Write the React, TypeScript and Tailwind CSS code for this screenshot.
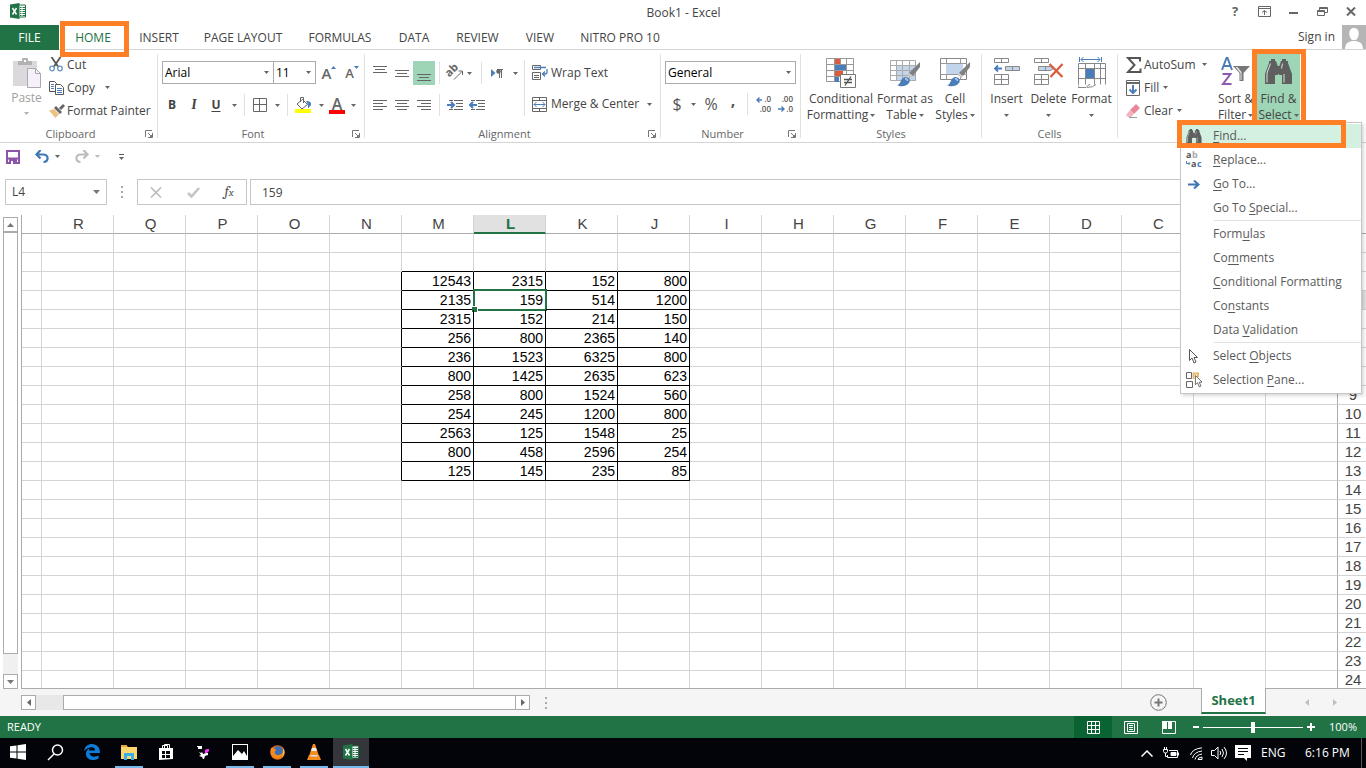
import type { ReactNode } from "react";
import clsx from "clsx";

const COLUMNS = ["R", "Q", "P", "O", "N", "M", "L", "K", "J", "I", "H", "G", "F", "E", "D", "C", "B", "A"];
const ROWS = Array.from({ length: 24 }, (_, i) => i + 1);
const DATA_COLUMNS = ["M", "L", "K", "J"];
const FIRST_DATA_ROW = 3;
const VALUES = [
	[12543, 2315, 152, 800],
	[2135, 159, 514, 1200],
	[2315, 152, 214, 150],
	[256, 800, 2365, 140],
	[236, 1523, 6325, 800],
	[800, 1425, 2635, 623],
	[258, 800, 1524, 560],
	[254, 245, 1200, 800],
	[2563, 125, 1548, 25],
	[800, 458, 2596, 254],
	[125, 145, 235, 85],
];

const TABS = [
	{ name: "HOME", width: "w-[68px]" },
	{ name: "INSERT", width: "w-[64px]" },
	{ name: "PAGE LAYOUT", width: "w-[104px]" },
	{ name: "FORMULAS", width: "w-[90px]" },
	{ name: "DATA", width: "w-[58px]" },
	{ name: "REVIEW", width: "w-[69px]" },
	{ name: "VIEW", width: "w-[56px]" },
	{ name: "NITRO PRO 10", width: "w-[104px]" },
];

/* ---------- small pieces ---------- */

function Arrow({ className = "text-[#666]" }: { className?: string }) {
	return (
		<svg width="5" height="3" viewBox="0 0 5 3" className={clsx("shrink-0", className)} fill="currentColor">
			<path d="M0 0h5L2.5 3z" />
		</svg>
	);
}

function DropButton({ label, className }: { label: string; className: string }) {
	return (
		<button aria-label={label} className={clsx("h-6 flex items-center justify-center", className)}>
			<Arrow />
		</button>
	);
}

function IconButton({ label, className = "w-[22px]", children }: { label: string; className?: string; children: ReactNode }) {
	return (
		<button aria-label={label} className={clsx("h-6 shrink-0 flex items-center justify-center", className)}>
			{children}
		</button>
	);
}

function Divider({ className = "h-[22px]" }: { className?: string }) {
	return <div className={clsx("w-px shrink-0 bg-[#e1e1e1]", className)} />;
}

function Launcher() {
	return (
		<svg width="8" height="8" viewBox="0 0 8 8" fill="none" stroke="#777">
			<path d="M.5 7V.5H7M3 3l3 3" />
			<path d="M7.5 3v4.5H3" />
			<path d="M5 7l2-2v2z" fill="#777" />
		</svg>
	);
}

function Group({ name, width, launcher, children }: { name?: string; width: string; launcher?: boolean; children: ReactNode }) {
	return (
		<>
			<section className={clsx("shrink-0 flex flex-col", width)}>
				<div className="h-[76px]">{children}</div>
				<div className="h-4 flex items-center pr-1">
					<span className={clsx("flex-1 text-center text-[11px] text-[#666]", launcher ? "pr-1" : "pl-1")}>{name}</span>
					{launcher && (
						<button aria-label={`${name} settings`}>
							<Launcher />
						</button>
					)}
				</div>
			</section>
			{name && <div className="my-1 w-px shrink-0 bg-[#e1e1e1]" />}
		</>
	);
}

function BigButton({ icon, lines, width }: { icon: ReactNode; lines: string[]; width: string }) {
	return (
		<button className={clsx("h-[74px] shrink-0 flex flex-col items-center pt-[7px] whitespace-nowrap", width)}>
			<span className="h-[34px]">{icon}</span>
			<span className="leading-4">{lines[0]}</span>
			<span className="h-4 leading-4 flex items-center gap-[2px]">
				{lines[1]}
				<Arrow />
			</span>
		</button>
	);
}

/* ---------- drawings ---------- */

function ExcelLogo() {
	return (
		<svg width="16" height="16" viewBox="0 0 16 16">
			<path d="M8 2h7.5v12H8z" fill="#fff" stroke="#217346" />
			<path d="M10 4.500h1.500M12.500 4.500H15M10 6.500h1.500M12.500 6.500H15M10 8.500h1.500M12.500 8.500H15M10 10.500h1.500M12.500 10.500H15M10 12.500h1.500M12.500 12.500H15" stroke="#217346" />
			<path d="M0 1.500L9.500 0v16L0 14.500z" fill="#217346" />
			<path d="M2.500 5l4 6.500M6.500 5l-4 6.500" stroke="#fff" strokeWidth="1.500" />
		</svg>
	);
}

function PasteIcon() {
	return (
		<svg width="28" height="30" viewBox="0 0 28 30">
			<path d="M0 3h24v25H0z" fill="#dcd9dd" />
			<path d="M5 3h4V1q0-1 1-1h4q1 0 1 1v2h4v4H5z" fill="#b4b1b5" />
			<path d="M11 2h2v2h-2z" fill="#fff" />
			<path d="M14.500 10.500h8l5 5v14h-13z" fill="#f6f0fa" stroke="#aaa" />
			<path d="M22.500 10.500v5h5" fill="none" stroke="#aaa" />
		</svg>
	);
}

function CutIcon() {
	return (
		<svg width="14" height="15" viewBox="0 0 14 15" fill="none">
			<path d="M2.500 0l6.500 9.500M11.500 0L5 9.500" stroke="#555" strokeWidth="1.800" />
			<circle cx="3" cy="11.500" r="2.300" stroke="#6a93bf" strokeWidth="1.300" />
			<circle cx="11" cy="11.500" r="2.300" stroke="#6a93bf" strokeWidth="1.300" />
		</svg>
	);
}

function CopyIcon() {
	return (
		<svg width="15" height="14" viewBox="0 0 15 14" fill="#fff" stroke="#555">
			<path d="M.5.5h5l2 2v8h-7z" />
			<path d="M2 3.500h3M2 5.500h3M2 7.500h3" stroke="#4a7ebb" />
			<path d="M6.500 3.500h5l3 3v7h-8z" />
			<path d="M8 7.500h5M8 9.500h5M8 11.500h5" stroke="#4a7ebb" />
		</svg>
	);
}

function BrushIcon() {
	return (
		<svg width="16" height="14" viewBox="0 0 16 14">
			<path d="M0 6.500l5-1.500 5 5-3.500 4z" fill="#eac282" />
			<path d="M5 4l2-2 6 6-2 2z" fill="#666" />
			<path d="M10 4l4-4 2 2-4 4z" fill="#666" />
		</svg>
	);
}

function BordersIcon() {
	return (
		<svg width="14" height="14" viewBox="0 0 14 14" fill="none" stroke="#666">
			<path d="M.5.500h13v13H.5zM6.500.500v13M.5 6.500h13" />
		</svg>
	);
}

function FillColorIcon() {
	return (
		<svg width="16" height="16" viewBox="0 0 16 16" fill="none">
			<path d="M7.500 2.500l5 5-5.500 4.500L2 7z" stroke="#666" fill="#fff" />
			<path d="M5.500 5V.5h3V6" stroke="#666" />
			<path d="M11 4c4-.5 5.500 2 5 4l-3 3.500c0-3 0-4.500-2-7.500z" fill="#4a7ebb" />
			<path d="M0 12h16v4H0z" fill="#ff0" />
		</svg>
	);
}

type AlignKind = "left" | "center" | "right";

function Lines({ kind = "left", count = 4 }: { kind?: AlignKind; count?: number }) {
	return (
		<svg width="14" height={count * 3} viewBox={`0 0 14 ${count * 3}`} stroke="#666">
			{Array.from({ length: count }, (_, i) => {
				const inset = i % 2 === 1 ? 4 : 0;
				const x1 = kind === "left" ? 0 : kind === "right" ? inset : inset / 2;
				return <path key={i} d={`M${x1} ${i * 3 + 1.5}h${14 - inset}`} />;
			})}
		</svg>
	);
}

function IndentIcon({ back }: { back?: boolean }) {
	return (
		<svg width="16" height="11" viewBox="0 0 16 11" fill="none">
			<path d="M2 .5h4M7 .5h9M9 3.500h7M9 6.500h7M2 9.500h4M7 9.500h9" stroke="#666" />
			{back ? (
				<path d="M8 5H1M4 2L1 5l3 3" stroke="#4a7ebb" strokeWidth="2" />
			) : (
				<path d="M0 5h7M4 2l3 3-3 3" stroke="#4a7ebb" strokeWidth="2" />
			)}
		</svg>
	);
}

function OrientationIcon() {
	return (
		<svg width="17" height="16" viewBox="0 0 17 16" fill="none" stroke="#666" className="overflow-visible">
			<text x="0" y="11" transform="rotate(-45 3 9)" fontSize="11" fontWeight="bold" fill="#666" stroke="none">
				ab
			</text>
			<path d="M7 14.500l8-8M11.500 6H15.500v4" />
		</svg>
	);
}

function DirectionIcon() {
	return (
		<svg width="12" height="9" viewBox="0 0 12 9">
			<path d="M0 0l4.500 4L0 8z" fill="#4a7ebb" />
			<path d="M8.500 0v9M10.500 0v9M6 .500h6" stroke="#666" />
			<circle cx="7.500" cy="2.500" r="2.300" fill="#666" />
		</svg>
	);
}

function WrapIcon() {
	return (
		<svg width="16" height="16" viewBox="0 0 16 16" fill="none" stroke="#666">
			<path d="M.5.500h8v4h-8zM.5 7.500h8v7h-8zM2 10.500h5M2 12.500h5" />
			<path d="M2 2.500h12M15 4v3q0 2-2 2h-3M13 6.500L10.500 9l2.500 2.500" stroke="#4a7ebb" strokeWidth="1.300" />
		</svg>
	);
}

function MergeIcon() {
	return (
		<svg width="15" height="15" viewBox="0 0 15 15" fill="none" stroke="#666">
			<path d="M.5.500h14v14H.5zM.5 3.500h14M.5 11.500h14M7.500.500v3M7.500 11.500v3" />
			<path d="M2 7.500h11M4.500 5L2 7.500 4.500 10M10.500 5L13 7.500 10.500 10" stroke="#4a7ebb" />
		</svg>
	);
}

function DecimalIcon({ less }: { less?: boolean }) {
	return (
		<svg width="15" height="15" viewBox="0 0 15 15" fontSize="8" fontWeight="600" fill="#555" textAnchor="end" className="overflow-visible">
			<text x="15" y="5">{less ? ".00" : ".0"}</text>
			<text x="15" y="15">{less ? ".0" : ".00"}</text>
			{less ? (
				<path d="M0 12h5.500M3.500 9.500L6 12l-2.500 2.500" stroke="#4a7ebb" strokeWidth="1.400" fill="none" />
			) : (
				<path d="M6 3H1M3.500.5L1 3l2.500 2.500" stroke="#4a7ebb" strokeWidth="1.400" fill="none" />
			)}
		</svg>
	);
}

function ConditionalIcon() {
	return (
		<svg width="30" height="31" viewBox="0 0 30 31" fill="none">
			<path d="M.5 1.500h27v23H.5zM.5 7.500h27M.5 13.500h27M.5 19.500h27M8.500 1.500v23M14.500 1.500v23M20.500 1.500v23" fill="#fff" stroke="#999" />
			<path d="M9 2h5v5H9zM9 14h8v5H9z" fill="#dd5a3a" />
			<path d="M9 8h11v5H9zM9 20h4v5H9z" fill="#4a7ebb" />
			<path d="M14.500 17.500h15v13h-15z" fill="#fff" stroke="#777" />
			<path d="M18 22.500h8M18 25.500h8M25 19.500l-6 9" stroke="#555" strokeWidth="1.300" />
		</svg>
	);
}

function PaintBrush() {
	return (
		<>
			<path d="M30 5v5l-7 9-4-3z" fill="#808080" />
			<path d="M19 16l4 3-1.500 2-4-3z" fill="#c8c8c8" />
			<path d="M7 28c4 0 3-7 8-8 4 0 6 3 4 6-3 4-9 4-12 2z" fill="#4a7ebb" />
			<path d="M15 22c2-1 3 1 2 2" fill="none" stroke="#fff" />
		</>
	);
}

function FormatTableIcon() {
	return (
		<svg width="30" height="31" viewBox="0 0 30 31">
			<path d="M.5 3.500h25v20H.5z" fill="#fff" />
			<path d="M7 8h19v16H7z" fill="#c3d5ea" />
			<path d="M.5 3.500h25v20H.5zM.5 8.500h25M.5 13.500h25M.5 18.500h25M6.500 3.500v20M12.500 3.500v20M19.500 3.500v20" stroke="#aaa" fill="none" />
			<PaintBrush />
		</svg>
	);
}

function CellStylesIcon() {
	return (
		<svg width="30" height="31" viewBox="0 0 30 31">
			<path d="M.5 1.500h26v21H.5z" fill="#fff" stroke="#888" />
			<path d="M.5 6.500h26M.5 17.500h26M6.500 1.500v21M20.500 1.500v21" stroke="#999" fill="none" />
			<path d="M6 7h17v10H6z" fill="#c3d5ea" />
			<PaintBrush />
		</svg>
	);
}

function InsertIcon() {
	return (
		<svg width="26" height="30" viewBox="0 0 26 30" fill="none" stroke="#888">
			<path d="M.5 1.500h14v4H.5zM7.500 1.500v4M.5 17.500h14v10H.5zM7.500 17.500v10M.5 22.500h14" />
			<path d="M11.500 9.500h14v4h-14zM18.500 9.500v4" fill="#c3d5ea" />
			<path d="M8 11.500H1M4 8.500l-3 3 3 3" stroke="#4a7ebb" strokeWidth="1.800" />
		</svg>
	);
}

function DeleteIcon() {
	return (
		<svg width="30" height="30" viewBox="0 0 30 30" fill="none" stroke="#888">
			<path d="M.5 1.500h14v4H.5zM7.500 1.500v4M.5 17.500h14v10H.5zM7.500 17.500v10M.5 22.500h14" />
			<path d="M4.500 9.500h12l3 2-3 2h-12zM11.500 9.500v4" fill="#c3d5ea" />
			<path d="M15.500 7l13 13M28.500 7l-12 13" stroke="#dc5b3c" strokeWidth="2.200" />
		</svg>
	);
}

function FormatIcon() {
	return (
		<svg width="28" height="32" viewBox="0 0 28 32" fill="none" stroke="#888">
			<path d="M.5 27.500v-21h27v21M.5 11.500h27M.5 21.500h27M7.500 6.500v21M16.500 6.500v21M22.500 6.500v21" />
			<path d="M8 12h8v9H8z" fill="#4a7ebb" stroke="none" />
			<path d="M0 27.500v3h8q2-3 4-3M9 30.500q6 0 9-3" />
			<path d="M1.500 0v5M23.500 0v5M3 2.500h19M5.500 0L3 2.500 5.500 5M19.500 0L22 2.500 19.500 5" stroke="#4a7ebb" />
		</svg>
	);
}

function SortIcon() {
	return (
		<svg width="30" height="30" viewBox="0 0 30 30">
			<path d="M1 13L5.500 1h1L11 13M2.500 9h7" fill="none" stroke="#4a7ebb" strokeWidth="2" />
			<path d="M1.500 17h8L2 27h8.500" fill="none" stroke="#8e5aae" strokeWidth="2" />
			<path d="M12 9h17l-6.500 7v8h-4v-8z" fill="#777" />
			<path d="M14.500 10h2l4 5v8h-1v-7z" fill="#e8e8e8" />
		</svg>
	);
}

function Binoculars({ className }: { className: string }) {
	return (
		<svg viewBox="0 0 27 25" className={className}>
			<path d="M6 0h4v2h1l2 6v8h-3v9H0V15L4 4V2h2z" fill="#5f5f5f" />
			<path d="M21 0h-4v2h-1l-2 6v8h3v9h10V15L23 4V2h-2z" fill="#5f5f5f" />
			<path d="M12 7h3v8h-3z" fill="#5f5f5f" />
			<path d="M5.500 4.500L2 14v9.500M17.500 4.500l-1 5M19 15v8.500" fill="none" stroke="#d8e4dc" />
		</svg>
	);
}

function SigmaIcon() {
	return (
		<svg width="16" height="16" viewBox="0 0 16 16" fill="none" stroke="#555" strokeWidth="2">
			<path d="M14 4.500V1H2l6.500 7L2 15h12.500v-3.500" />
		</svg>
	);
}

function FillIcon() {
	return (
		<svg width="14" height="16" viewBox="0 0 14 16" fill="none">
			<path d="M.5.500h13v15H.5z" stroke="#666" />
			<path d="M1 3h12" stroke="#666" strokeWidth="2" />
			<path d="M7 5v8M3.500 9.500L7 13l3.500-3.500" stroke="#4a7ebb" strokeWidth="2" />
		</svg>
	);
}

function EraserIcon() {
	return (
		<svg width="14" height="14" viewBox="0 0 14 14">
			<path d="M10 0l4 4-6 6-4-4z" fill="#e8889a" />
			<path d="M4 6l4 4-3 3H2L0 11z" fill="#f2b3bf" />
			<path d="M3 13.500h8" stroke="#999" />
		</svg>
	);
}

function CursorArrow() {
	return <path d="M.5.500v11l2.500-2.500 2 5 2-1-2-4.500h3.500z" fill="#fff" stroke="#555" />;
}

const MENU: { before: string; key: string; after: string; icon?: ReactNode; line?: boolean }[] = [
	{ before: "", key: "F", after: "ind...", icon: <Binoculars className="w-4 h-[14px]" /> },
	{
		before: "",
		key: "R",
		after: "eplace...",
		icon: (
			<svg width="16" height="16" viewBox="0 0 16 16" fontSize="9" fontWeight="bold" className="overflow-visible">
				<text x="0" y="6" fill="#555">a</text>
				<text x="6" y="6" fill="#aaa">b</text>
				<text x="5" y="15" fill="#555">a</text>
				<text x="11" y="15" fill="#4a7ebb">c</text>
				<path d="M.5 9v2.500h3M2.500 10l1.500 1.500L2.500 13" fill="none" stroke="#4a7ebb" />
			</svg>
		),
	},
	{
		before: "",
		key: "G",
		after: "o To...",
		icon: (
			<svg width="12" height="9" viewBox="0 0 12 9" fill="none" stroke="#3c76b4" strokeWidth="2">
				<path d="M0 4.500h10M6 .500l4.500 4-4.500 4" />
			</svg>
		),
	},
	{ before: "Go To ", key: "S", after: "pecial...", line: true },
	{ before: "Form", key: "u", after: "las" },
	{ before: "Co", key: "m", after: "ments" },
	{ before: "", key: "C", after: "onditional Formatting" },
	{ before: "Co", key: "n", after: "stants" },
	{ before: "Data ", key: "V", after: "alidation", line: true },
	{
		before: "Select ",
		key: "O",
		after: "bjects",
		icon: (
			<svg width="9" height="15" viewBox="0 0 9 15">
				<CursorArrow />
			</svg>
		),
	},
	{
		before: "Selection ",
		key: "P",
		after: "ane...",
		icon: (
			<svg width="16" height="16" viewBox="0 0 16 16" fill="none" stroke="#666">
				<path d="M.5.500h5v6h-5zM.5 9.500h6v6h-6z" />
				<path d="M7.500 7V1.500h4.500V5" stroke="#e8b968" strokeWidth="2" />
				<g transform="translate(9 3) scale(.85)">
					<CursorArrow />
				</g>
			</svg>
		),
	},
];

/* ---------- window parts ---------- */

function TitleBar() {
	return (
		<header className="h-[25px] shrink-0 flex items-center pl-[10px] pr-[7px]">
			<div className="w-[130px] pb-[3px]">
				<ExcelLogo />
			</div>
			<h1 className="flex-1 text-center text-[12px] text-[#444]">Book1 - Excel</h1>
			<div className="flex items-center gap-[13px] pb-[3px] text-[#666]">
				<button aria-label="Help" className="w-4 text-[13px] leading-4 font-bold">
					?
				</button>
				<button aria-label="Ribbon display options" className="w-4 flex justify-center">
					<svg width="13" height="11" viewBox="0 0 13 11" fill="none" stroke="currentColor">
						<path d="M.5.500h12v10H.5zM.5 2.500h12M6.500 9V5M4 6.500L6.500 4.500 9 6.500" />
					</svg>
				</button>
				<button aria-label="Minimize" className="w-4 flex justify-center">
					<svg width="9" height="5" viewBox="0 0 9 5" stroke="currentColor" strokeWidth="2">
						<path d="M0 4h9" />
					</svg>
				</button>
				<button aria-label="Restore" className="w-4 flex justify-center">
					<svg width="11" height="9" viewBox="0 0 11 9" fill="none" stroke="currentColor">
						<path d="M2.500 3V.500h8v5H8M2.500 1.500h8M.5 3.500h7v5h-7zM.5 4.500h7" />
					</svg>
				</button>
				<button aria-label="Close" className="w-4 flex justify-center">
					<svg width="10" height="9" viewBox="0 0 10 9" stroke="currentColor" strokeWidth="2">
						<path d="M1 .5l8 8M9 .5l-8 8" />
					</svg>
				</button>
			</div>
		</header>
	);
}

function TabRow() {
	return (
		<nav className="h-[25px] shrink-0 flex items-stretch border-b border-[#d4d4d4] text-[12px] text-[#444] whitespace-nowrap">
			<button className="w-[59px] h-[25px] shrink-0 bg-[#217346] text-white">FILE</button>
			{TABS.map((tab) => (
				<div key={tab.name} className={clsx("relative shrink-0 flex justify-center", tab.width)}>
					<button className={clsx("h-[25px]", tab.name === "HOME" && "text-[#217346]")}>{tab.name}</button>
					{tab.name === "HOME" && (
						<div className="absolute z-10 left-px -top-1 w-[69px] h-9 border-[5px] border-[#ff7f27]" />
					)}
				</div>
			))}
			<div className="flex-1 flex items-center justify-end gap-[7px]">
				<a href="#signin">Sign in</a>
				<svg width="24" height="24" viewBox="0 0 24 24" className="bg-[#b5b5b5]">
					<path d="M12 3c7 0 5 11 1.500 12h-3C7 14 5 3 12 3z" fill="#fff" />
					<path d="M3 24c0-6 4-8 9-8s9 2 9 8z" fill="#fff" />
				</svg>
			</div>
		</nav>
	);
}

function FindMenu() {
	return (
		<div className="absolute z-20 top-[72px] right-1 w-[182px] bg-white border border-[#c6c6c6] pt-px pb-px shadow-[2px_2px_3px_rgba(0,0,0,0.15)]">
			{MENU.map((item, i) => (
				<div key={item.before + item.key + item.after}>
					<button
						className={clsx(
							"w-full h-6 flex items-center text-left text-[12px] text-[#5a5a5a] whitespace-nowrap",
							i === 0 && "bg-[#d3f0e0]",
						)}
					>
						<span className="w-[25px] mr-[7px] shrink-0 flex justify-center">{item.icon}</span>
						<span>
							{item.before}
							<u className="underline-offset-2">{item.key}</u>
							{item.after}
						</span>
					</button>
					{item.line && <div className="ml-[33px] mb-px h-px bg-[#e1e1e1]" />}
				</div>
			))}
			<div className="absolute -left-1 -top-[3px] w-[169px] h-7 border-[5px] border-[#ff7f27]" />
		</div>
	);
}

function ClipboardGroup() {
	return (
		<Group name="Clipboard" width="w-[157px]" launcher>
			<div className="flex">
				<button className="w-[49px] pt-2 pl-1 flex flex-col items-center text-[#a0a0a0]">
					<PasteIcon />
					<span className="leading-5">Paste</span>
					<Arrow className="text-[#b0b0b0] mt-1" />
				</button>
				<div className="pt-[3px]">
					<button className="h-[23px] flex items-center">
						<span className="w-[18px]"><CutIcon /></span>
						Cut
					</button>
					<div className="h-[23px] flex items-center">
						<button className="flex items-center">
							<span className="w-[18px]"><CopyIcon /></span>
							Copy
						</button>
						<DropButton label="Copy options" className="w-6" />
					</div>
					<button className="h-[23px] flex items-center">
						<span className="w-[18px]"><BrushIcon /></span>
						Format Painter
					</button>
				</div>
			</div>
		</Group>
	);
}

function Combo({ label, value, width }: { label: string; value: string; width: string }) {
	return (
		<label className={clsx("h-[23px] shrink-0 flex items-center border border-[#ababab] bg-white pr-1", width)}>
			<select aria-label={label} defaultValue={value} className="flex-1 min-w-0 appearance-none pl-[2px] text-[12px] text-black outline-none">
				<option>{value}</option>
			</select>
			<Arrow />
		</label>
	);
}

function FontGroup() {
	return (
		<Group name="Font" width="w-[206px]" launcher>
			<div className="pl-1 pt-[11px] flex">
				<Combo label="Font" value="Arial" width="w-[112px]" />
				<Combo label="Font size" value="11" width="w-[43px] -ml-px" />
				<IconButton label="Increase font size" className="w-[26px] text-[#666]">
					<span className="text-[15px] font-semibold">A</span>
					<Arrow className="text-[#4a7ebb] rotate-180 mb-3" />
				</IconButton>
				<IconButton label="Decrease font size" className="w-[20px] text-[#666]">
					<span className="text-[13px] font-semibold">A</span>
					<Arrow className="text-[#4a7ebb] mb-3" />
				</IconButton>
			</div>
			<div className="pl-[3px] pt-2 flex items-center">
				<IconButton label="Bold"><b>B</b></IconButton>
				<IconButton label="Italic"><i className="font-serif font-bold text-[14px]">I</i></IconButton>
				<IconButton label="Underline"><b className="underline underline-offset-2">U</b></IconButton>
				<DropButton label="Underline options" className="w-[14px]" />
				<Divider className="h-[22px] ml-[3px] mr-1" />
				<IconButton label="Borders"><BordersIcon /></IconButton>
				<DropButton label="Border options" className="w-3" />
				<Divider className="h-[22px] ml-1" />
				<IconButton label="Fill color" className="w-[30px]"><FillColorIcon /></IconButton>
				<DropButton label="Fill color options" className="w-[6px]" />
				<IconButton label="Font color" className="w-[26px]">
					<span className="w-4 h-[18px] border-b-4 border-[#f00] text-[16px] leading-4 font-semibold text-[#666]">A</span>
				</IconButton>
				<DropButton label="Font color options" className="w-[6px]" />
			</div>
		</Group>
	);
}

function AlignmentGroup() {
	return (
		<Group name="Alignment" width="w-[295px]" launcher>
			<div className="flex">
				<div className="pl-1">
					<div className="pt-[11px] flex items-center">
						<IconButton label="Top align" className="w-[22px] pb-2"><Lines count={3} kind="center" /></IconButton>
						<IconButton label="Middle align"><Lines count={3} kind="center" /></IconButton>
						<IconButton label="Bottom align" className="w-[22px] pt-2 bg-[#9fd5b7]"><Lines count={3} kind="center" /></IconButton>
						<Divider className="h-[22px] ml-1" />
						<IconButton label="Orientation" className="w-[26px] pl-1"><OrientationIcon /></IconButton>
						<DropButton label="Orientation options" className="w-[6px]" />
						<Divider className="h-[22px] ml-[9px]" />
						<IconButton label="Text direction" className="w-[30px]"><DirectionIcon /></IconButton>
						<DropButton label="Text direction options" className="w-[6px]" />
					</div>
					<div className="pt-2 flex items-center">
						<IconButton label="Align left"><Lines /></IconButton>
						<IconButton label="Center"><Lines kind="center" /></IconButton>
						<IconButton label="Align right"><Lines kind="right" /></IconButton>
						<Divider className="h-[22px] ml-1 mr-1" />
						<IconButton label="Decrease indent"><IndentIcon /></IconButton>
						<IconButton label="Increase indent"><IndentIcon back /></IconButton>
					</div>
				</div>
				<Divider className="h-14 mt-[10px] ml-[6px]" />
				<div className="pt-[11px] pl-[7px]">
					<button className="h-6 flex items-center">
						<span className="w-[19px]"><WrapIcon /></span>
						Wrap Text
					</button>
					<div className="mt-[7px] flex items-center">
						<button className="h-6 flex items-center">
							<span className="w-[19px]"><MergeIcon /></span>
							Merge &amp; Center
						</button>
						<DropButton label="Merge options" className="w-5" />
					</div>
				</div>
			</div>
		</Group>
	);
}

function NumberGroup() {
	return (
		<Group name="Number" width="w-[139px]" launcher>
			<div className="pl-1 pt-[11px]">
				<Combo label="Number format" value="General" width="w-[131px]" />
				<div className="pt-2 flex items-center text-[16px] text-[#555]">
					<IconButton label="Accounting format" className="w-6">$</IconButton>
					<DropButton label="Accounting options" className="w-2" />
					<IconButton label="Percent style" className="w-7">%</IconButton>
					<IconButton label="Comma style" className="w-4 pb-2"><b>,</b></IconButton>
					<Divider className="h-[22px] ml-[6px] mr-1" />
					<IconButton label="Increase decimal"><DecimalIcon /></IconButton>
					<IconButton label="Decrease decimal"><DecimalIcon less /></IconButton>
				</div>
			</div>
		</Group>
	);
}

function EditingGroup() {
	return (
		<Group width="w-[248px]">
			<div className="flex">
				<div className="w-[96px] shrink-0 pt-[3px] pl-2">
					<div className="h-[23px] flex items-center">
						<button className="flex items-center">
							<span className="w-[18px]"><SigmaIcon /></span>
							AutoSum
						</button>
						<DropButton label="AutoSum options" className="w-5" />
					</div>
					<button className="h-[23px] flex items-center">
						<span className="w-[18px]"><FillIcon /></span>
						Fill
						<Arrow className="text-[#666] ml-1" />
					</button>
					<button className="h-[23px] flex items-center">
						<span className="w-[18px]"><EraserIcon /></span>
						Clear
						<Arrow className="text-[#666] ml-1" />
					</button>
				</div>
				<BigButton icon={<SortIcon />} lines={["Sort &", "Filter"]} width="w-[43px]" />
				<div className="relative shrink-0 bg-[#9fd5b7]">
					<BigButton icon={<Binoculars className="w-[27px] h-[27px] pt-[2px]" />} lines={["Find &", "Select"]} width="w-[43px]" />
					<div className="absolute -left-[5px] -right-[6px] -top-px -bottom-px border-[5px] border-[#ff7f27] border-b-0" />
				</div>
			</div>
		</Group>
	);
}

function Ribbon() {
	return (
		<div className="relative shrink-0 h-[93px] flex border-b border-[#d4d4d4] text-[12px] leading-4 text-[#444] whitespace-nowrap">
			<ClipboardGroup />
			<FontGroup />
			<AlignmentGroup />
			<NumberGroup />
			<Group name="Styles" width="w-[180px]">
				<div className="flex pl-1">
					<BigButton icon={<ConditionalIcon />} lines={["Conditional", "Formatting"]} width="w-[72px]" />
					<BigButton icon={<FormatTableIcon />} lines={["Format as", "Table"]} width="w-14" />
					<BigButton icon={<CellStylesIcon />} lines={["Cell", "Styles"]} width="w-11" />
				</div>
			</Group>
			<Group name="Cells" width="w-[135px]">
				<div className="flex pl-1">
					<BigButton icon={<InsertIcon />} lines={["Insert", ""]} width="w-[41px]" />
					<BigButton icon={<DeleteIcon />} lines={["Delete", ""]} width="w-[43px]" />
					<BigButton icon={<FormatIcon />} lines={["Format", ""]} width="w-[43px]" />
				</div>
			</Group>
			<EditingGroup />
			<FindMenu />
		</div>
	);
}

function QuickAccess() {
	return (
		<div className="h-[27px] shrink-0 flex items-center pl-[6px]">
			<button aria-label="Save">
				<svg width="14" height="14" viewBox="0 0 14 14" fill="none" stroke="#8c55aa" strokeWidth="2">
					<path d="M1 1h12v12H1zM1 8.500h12" />
					<path d="M3 8h8v6H3z" fill="#8c55aa" stroke="none" />
					<path d="M5 11h2v3H5z" fill="#fff" stroke="none" />
				</svg>
			</button>
			<button aria-label="Undo" className="ml-[15px]">
				<svg width="14" height="13" viewBox="0 0 14 13" fill="none" stroke="#3f78b5" strokeWidth="2.200">
					<path d="M5.500 0L1.500 4.500 5.500 8.500M1.500 4.500H8c6 0 6 7 .5 7.500" />
				</svg>
			</button>
			<DropButton label="Undo list" className="w-4" />
			<button aria-label="Redo" className="ml-[10px]">
				<svg width="14" height="13" viewBox="0 0 14 13" fill="none" stroke="#bdbdbd" strokeWidth="2.200">
					<path d="M8.500 0l4 4.500-4 4M12.500 4.500H6c-6 0-6 7-.5 7.500" />
				</svg>
			</button>
			<button aria-label="Redo list" className="w-4 h-6 flex items-center justify-center">
				<Arrow className="text-[#bbb]" />
			</button>
			<button aria-label="Customize toolbar" className="ml-[14px] flex flex-col items-center gap-[2px]">
				<span className="w-[5px] h-px bg-[#555]" />
				<Arrow />
			</button>
		</div>
	);
}

function Dots() {
	return (
		<div className="flex flex-col gap-[3px]">
			<span className="w-[2px] h-[2px] bg-[#aaa]" />
			<span className="w-[2px] h-[2px] bg-[#aaa]" />
			<span className="w-[2px] h-[2px] bg-[#aaa]" />
		</div>
	);
}

function FormulaBar() {
	return (
		<div className="h-9 shrink-0 mt-[9px] flex items-start pl-[5px] text-[12px] text-[#444]">
			<div className="w-[102px] h-[26px] flex items-center border border-[#c6c6c6] pr-[6px]">
				<input aria-label="Name box" defaultValue="L4" className="flex-1 min-w-0 pl-[6px] outline-none" />
				<svg width="7" height="4" viewBox="0 0 7 4" fill="#777"><path d="M0 0h7L3.500 4z" /></svg>
			</div>
			<div className="w-[30px] h-[26px] flex items-center justify-center"><Dots /></div>
			<div className="w-[110px] h-[26px] flex items-center justify-around border border-[#c6c6c6]">
				<button aria-label="Cancel">
					<svg width="12" height="11" viewBox="0 0 12 11" stroke="#bbb" strokeWidth="1.600"><path d="M1 .5l10 10M11 .5l-10 10" /></svg>
				</button>
				<button aria-label="Enter">
					<svg width="13" height="11" viewBox="0 0 13 11" stroke="#c4c4c4" strokeWidth="2.600" fill="none"><path d="M1 6l3.500 3.500L12 1" /></svg>
				</button>
				<button aria-label="Insert function" className="font-serif italic text-[15px] leading-4 text-[#555]">
					f<span className="text-[11px]">x</span>
				</button>
			</div>
			<input
				aria-label="Formula"
				defaultValue="159"
				className="flex-1 min-w-0 h-[26px] ml-[3px] mr-1 border border-[#c6c6c6] pl-[11px] outline-none"
			/>
		</div>
	);
}

function cellValue(column: string, row: number) {
	const c = DATA_COLUMNS.indexOf(column);
	const line = VALUES[row - FIRST_DATA_ROW];
	return c >= 0 && line ? line[c] : undefined;
}

function Cell({ column, row }: { column: string; row: number }) {
	const inRows = row >= FIRST_DATA_ROW && row < FIRST_DATA_ROW + VALUES.length;
	const isData = DATA_COLUMNS.includes(column);
	const blackRight = inRows && (isData || column === "N");
	const blackBottom = isData && (inRows || row === FIRST_DATA_ROW - 1);
	const selected = column === "L" && row === 4;

	return (
		<td
			className={clsx(
				"relative h-[19px] border-r border-b p-0 pr-[2px] text-right text-[14px] leading-[18px] text-black",
				blackRight ? "border-r-black" : column === "A" ? "border-r-[#ababab]" : "border-r-[#d4d4d4]",
				blackBottom ? "border-b-black" : "border-b-[#d4d4d4]",
			)}
		>
			{cellValue(column, row)}
			{selected && (
				<div className="absolute -left-px -right-[2px] -top-[2px] -bottom-[2px] border-2 border-[#217346]">
					<div className="absolute -left-[3px] -bottom-[3px] w-[6px] h-[6px] bg-[#217346] border-t border-r border-white" />
				</div>
			)}
		</td>
	);
}

function Sheet() {
	return (
		<div className="flex-1 min-h-0 flex overflow-hidden">
			<div className="w-[21px] shrink-0 pt-[2px] pl-[3px] flex flex-col">
				<button aria-label="Scroll up" className="w-[15px] h-[15px] shrink-0 border border-[#ababab] flex items-center justify-center">
					<svg width="7" height="4" viewBox="0 0 7 4" fill="#777"><path d="M0 4h7L3.500 0z" /></svg>
				</button>
				<div className="w-[15px] flex-1 bg-[#f0f0f0] pb-5 flex">
					<div className="flex-1 border border-[#ababab] bg-white" />
				</div>
				<button aria-label="Scroll down" className="w-[15px] h-[15px] shrink-0 border border-[#ababab] flex items-center justify-center">
					<svg width="7" height="4" viewBox="0 0 7 4" fill="#777"><path d="M0 0h7L3.500 4z" /></svg>
				</button>
			</div>
			<div className="flex-1 min-w-0 overflow-hidden border-l border-b border-[#ababab]">
				<table className="w-full table-fixed border-separate border-spacing-0 font-['Liberation_Sans',Arial,sans-serif] text-[15px]">
					<colgroup>
						<col />
						{COLUMNS.map((c) => (
							<col key={c} className="w-[72px]" />
						))}
						<col className="w-7" />
					</colgroup>
					<thead>
						<tr className="text-[#444]">
							<th className="h-[19px] p-0 border-b border-b-[#ababab] border-r border-r-[#d4d4d4]" />
							{COLUMNS.map((c) => (
								<th
									key={c}
									className={clsx(
										"h-[19px] p-0 pl-[2px] border-r border-r-[#d4d4d4]",
										c === "L"
											? "bg-[#e1e1e1] text-[#217346] font-bold leading-[17px] border-b-2 border-b-[#217346]"
											: "font-normal leading-[18px] border-b border-b-[#ababab]",
									)}
								>
									{c}
								</th>
							))}
							<th className="p-0 border-b border-b-[#ababab]" />
						</tr>
					</thead>
					<tbody>
						{ROWS.map((row) => (
							<tr key={row}>
								<td className="h-[19px] p-0 border-r border-b border-[#d4d4d4]" />
								{COLUMNS.map((c) => (
									<Cell key={c} column={c} row={row} />
								))}
								<th
									className={clsx(
										"h-[19px] p-0 pl-[2px] leading-[18px] font-normal border-b border-[#d4d4d4]",
										row === 4 ? "bg-[#e1e1e1] text-[#217346]" : "text-[#444]",
									)}
								>
									{row}
								</th>
							</tr>
						))}
					</tbody>
				</table>
			</div>
		</div>
	);
}

function SheetTabs() {
	return (
		<div className="h-[27px] shrink-0 flex items-center bg-[#f5f5f5] pl-[21px]">
			<button aria-label="Scroll left" className="w-[15px] h-[15px] border border-[#ababab] bg-white flex items-center justify-center">
				<svg width="4" height="7" viewBox="0 0 4 7" fill="#666"><path d="M4 0v7L0 3.500z" /></svg>
			</button>
			<div className="w-[480px] h-[15px] bg-[#e8e8e8] flex justify-end">
				<div className="w-[453px] border border-[#ababab] bg-white" />
			</div>
			<button aria-label="Scroll right" className="w-[15px] h-[15px] -ml-px border border-[#ababab] bg-white flex items-center justify-center">
				<svg width="4" height="7" viewBox="0 0 4 7" fill="#666"><path d="M0 0v7l4-3.500z" /></svg>
			</button>
			<div className="ml-[15px]"><Dots /></div>
			<div className="flex-1" />
			<button aria-label="New sheet" className="mr-[34px]">
				<svg width="17" height="17" viewBox="0 0 17 17" fill="none" stroke="#777">
					<circle cx="8.500" cy="8.500" r="7.800" />
					<path d="M8.500 4.500v8M4.500 8.500h8" strokeWidth="2" />
				</svg>
			</button>
			<button className="relative self-start -mt-px w-[65px] h-[26px] bg-white border-x border-[#ababab] border-b-2 border-b-[#217346] text-[13px] leading-6 font-bold text-[#217346]">
				Sheet1
			</button>
			<div className="w-[100px] flex gap-6 pl-[39px]">
				<svg width="4" height="7" viewBox="0 0 4 7" fill="#c0c0c0"><path d="M4 0v7L0 3.500z" /></svg>
				<svg width="4" height="7" viewBox="0 0 4 7" fill="#c0c0c0"><path d="M0 0v7l4-3.500z" /></svg>
			</div>
		</div>
	);
}

function StatusBar() {
	return (
		<footer className="h-[22px] shrink-0 flex items-center bg-[#217346] text-white text-[11px] pl-[7px] pr-[9px]">
			<span className="flex-1">READY</span>
			<button aria-label="Normal view" className="w-[38px] h-[22px] bg-[#0a6332] flex items-center justify-center">
				<svg width="13" height="13" viewBox="0 0 13 13" fill="none" stroke="#fff">
					<path d="M.5.500h12v12H.5zM4.500.500v12M8.500.500v12M.5 4.500h12M.5 8.500h12" />
				</svg>
			</button>
			<button aria-label="Page layout view" className="w-[38px] h-[22px] flex items-center justify-center">
				<svg width="14" height="13" viewBox="0 0 14 13" fill="none" stroke="#fff">
					<path d="M.5.500h13v12H.5zM3.500 2.500h7v8h-7zM5 4.500h4M5 6.500h4M5 8.500h4" />
				</svg>
			</button>
			<button aria-label="Page break view" className="w-[38px] h-[22px] flex items-center justify-center">
				<svg width="14" height="13" viewBox="0 0 14 13">
					<path d="M.5.500h13v12H.5z" fill="none" stroke="#fff" />
					<path d="M0 0h5v8H0zM6 0h4v8H6z" fill="#fff" />
				</svg>
			</button>
			<button aria-label="Zoom out" className="ml-[5px] w-[10px]">
				<svg width="6" height="8" viewBox="0 0 6 8"><path d="M0 3h6v2H0z" fill="#fff" /></svg>
			</button>
			<input
				type="range"
				aria-label="Zoom"
				min={0}
				max={100}
				defaultValue={50}
				className="w-[100px] h-3 appearance-none bg-[linear-gradient(#fff,#fff)] bg-[length:100%_1px] bg-center bg-no-repeat [&::-webkit-slider-thumb]:appearance-none [&::-webkit-slider-thumb]:w-1 [&::-webkit-slider-thumb]:h-[11px] [&::-webkit-slider-thumb]:bg-white"
			/>
			<button aria-label="Zoom in" className="w-4 flex justify-center">
				<svg width="8" height="8" viewBox="0 0 8 8"><path d="M0 3h3V0h2v3h3v2H5v3H3V5H0z" fill="#fff" /></svg>
			</button>
			<span className="w-[38px] text-right">100%</span>
		</footer>
	);
}

const APPS: { name: string; open?: boolean; icon: ReactNode }[] = [
	{
		name: "Start",
		icon: (
			<svg width="16" height="16" viewBox="0 0 16 16" fill="#fff">
				<path d="M0 2.300L6.500 1.400V7.600H0zM7.500 1.200L16 0V7.600H7.500zM0 8.500h6.500v6.100L0 13.700zM7.500 8.500H16V16L7.500 14.800z" />
			</svg>
		),
	},
	{
		name: "Search",
		icon: (
			<svg width="17" height="17" viewBox="0 0 17 17" fill="none" stroke="#fff" strokeWidth="1.500">
				<circle cx="10.500" cy="6" r="5" />
				<path d="M7 10l-6 6" />
			</svg>
		),
	},
	{
		name: "Edge",
		icon: (
			<svg width="16" height="16" viewBox="0 0 16 16" fill="#0c7cd8">
				<path d="M0 7C1 2 4 0 8 0c5 0 8 3.500 8 9H5.500c.5 4 5.500 4.500 9 2.500v3.200C8 18 1.500 15 2 9c.3-2.500 2-4 4-4.800C5 5 5 6 5 6.500h6c0-5-7-4-11 .5z" />
			</svg>
		),
	},
	{
		name: "Explorer",
		open: true,
		icon: (
			<svg width="16" height="15" viewBox="0 0 16 15">
				<path d="M0 1h6l1 1h9v12H0z" fill="#fbd772" />
				<path d="M0 0h6v2H0z" fill="#e9a53a" />
				<path d="M3 8h10v7h-3v-4H6v4H3z" fill="#3aaee8" />
			</svg>
		),
	},
	{
		name: "Store",
		icon: (
			<svg width="14" height="16" viewBox="0 0 14 16">
				<path d="M3.500 4V1.500h5V4M5.500 4V.5h5V4" fill="none" stroke="#fff" />
				<path d="M0 4h14v11L0 16z" fill="#fff" />
				<path d="M3 7h3v3H3zM7 7h4v3H7zM3 11h3v3H3zM7 11h4v3H7z" fill="#05060c" />
			</svg>
		),
	},
	{
		name: "Recorder",
		icon: (
			<svg width="13" height="13" viewBox="0 0 13 13">
				<path d="M0 0h5v3H1V1H0zM2 6l2 1 1-1 1 2 3-1h2v2l-3 1-1 3H6l-1-2-3-1 2-1z" fill="#fff" />
				<path d="M8 4l2-1h2v2l-2 2H8z" fill="#f3f" />
			</svg>
		),
	},
	{
		name: "Photos",
		open: true,
		icon: (
			<svg width="16" height="16" viewBox="0 0 16 16">
				<path d="M0 0h16v16H0z" fill="#fff" />
				<path d="M1 1h14v11l-3-5-2 3-4-4-5 6z" fill="#05060c" />
			</svg>
		),
	},
	{
		name: "Firefox",
		open: true,
		icon: (
			<svg width="15" height="15" viewBox="0 0 15 15">
				<circle cx="7.500" cy="7.500" r="7.300" fill="#e66a15" />
				<circle cx="8" cy="6" r="4.800" fill="#3a6fb8" />
				<path d="M1 3c2 0 4 0 5 2L4.500 7c1 4 5 4 8 1 0 4-3 6-6 5.500C1 12 0 8 1 3z" fill="#f58b1c" />
				<path d="M13 3c2 3 2 7-1 9 1-3 1-6 1-9z" fill="#fbc33a" />
			</svg>
		),
	},
	{
		name: "VLC",
		open: true,
		icon: (
			<svg width="14" height="16" viewBox="0 0 14 16">
				<path d="M6 0h2l4 12H2z" fill="#f58a1f" />
				<path d="M5 4h4l1 3H4z" fill="#eee" />
				<path d="M2 11h10l2 5H0z" fill="#f58a1f" />
				<path d="M3 11h8l-1 1.500H4z" fill="#ddd" />
			</svg>
		),
	},
];

function Taskbar() {
	return (
		<div className="h-[30px] shrink-0 flex items-center bg-[#03040a] text-white text-[12px]">
			{APPS.map((app) => (
				<button key={app.name} aria-label={app.name} className="w-[37px] h-[30px] pr-px flex flex-col items-center">
					<span className="flex-1 flex items-center">{app.icon}</span>
					<span className={clsx("w-7 h-[2px]", app.open && "bg-[#76b9ed]")} />
				</button>
			))}
			<button aria-label="Excel" className="w-9 h-[30px] flex items-center justify-center bg-[#34363b] border-b-2 border-[#76b9ed]">
				<ExcelLogo />
			</button>
			<div className="flex-1" />
			<div className="flex items-center">
				<svg width="12" height="7" viewBox="0 0 12 7" fill="none" stroke="#fff" strokeWidth="1.500" className="mr-[10px]">
					<path d="M.5 6.500L6 1l5.500 5.500" />
				</svg>
				<svg width="16" height="12" viewBox="0 0 16 12" fill="none" stroke="#fff" className="mr-[11px]">
					<path d="M6 3.500h8.500v7H4.500V8M15.500 5.500v3M.5 2.500v2l1 1.500h2l1-1.500v-2zM1.500 0v2M3.500 0v2M2.500 6v3.500h2" />
					<path d="M8 5.500h5v3H8z" fill="#fff" />
				</svg>
				<svg width="13" height="13" viewBox="0 0 13 13" fill="none" stroke="#fff" className="mr-2">
					<path d="M.5 8Q2 2 12 .8M2.500 11Q4 5 12 4M5 12.500Q6 8 12 7M8 12.500q0-2 4-2.500v2.500z" />
				</svg>
				<svg width="17" height="14" viewBox="0 0 17 14" fill="none" stroke="#fff" className="mr-[7px]">
					<path d="M.5 4.500h3l3.500-3.500v12L3.500 9.500h-3zM9 5q1.500 2 0 4M11 3q3 4 0 8M13 1q5 6 0 12" />
				</svg>
				<svg width="16" height="16" viewBox="0 0 16 16" className="mr-[10px]">
					<path d="M0 0h16v13h-4v3L9 13H0z" fill="#fff" />
					<path d="M3 3.500h10M3 6.500h10M3 9.500h6" stroke="#05060c" />
				</svg>
				<span className="w-[44px]">ENG</span>
				<span className="w-[56px]">6:16 PM</span>
				<div className="w-px h-[30px] bg-[#555] mr-1" />
			</div>
		</div>
	);
}

export default function App() {
	return (
		<div className="h-screen flex flex-col overflow-hidden bg-white font-['Open_Sans','Noto_Sans',sans-serif]">
			<TitleBar />
			<TabRow />
			<Ribbon />
			<QuickAccess />
			<FormulaBar />
			<Sheet />
			<SheetTabs />
			<StatusBar />
			<Taskbar />
		</div>
	);
}
